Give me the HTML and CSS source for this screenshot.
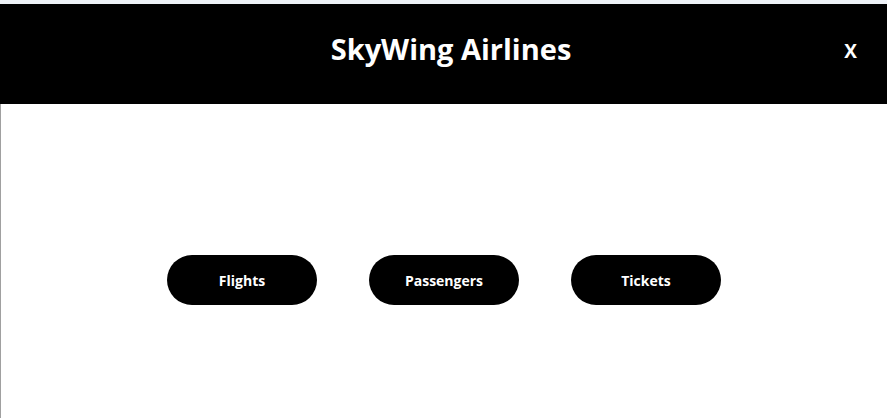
FILE: index.html
```html
<!DOCTYPE html>
<html lang="en">
  <head>
    <meta charset="UTF-8" />
    <meta name="viewport" content="width=device-width, initial-scale=1.0" />
    <title>SkyWing Airlines</title>
    <link rel="stylesheet" href="styles.css">
  </head>
  <body>
    <div id="topbar"></div>
    <div id="app">
      <header id="header">
        <h1>SkyWing Airlines</h1>
        <button id="close">X</button>
      </header>
      <main id="menu">
        <button class="menu-btn">Flights</button>
        <button class="menu-btn">Passengers</button>
        <button class="menu-btn">Tickets</button>
      </main>
    </div>
  </body>
</html>
```

FILE: styles.css
```css
html {
  box-sizing: border-box;
}
body {
  font-family: "Open Sans", Arial, sans-serif;
  margin: 0;
  padding: 0;
  background-color: white;
  height: 418px;
  overflow: hidden;
}
#topbar {
  height: 4px;
  background-color: #eef2f8;
}
#app {
  border-left: 1px solid #a0a0a0;
  height: 414px;
  display: flex;
  flex-direction: column;
}
#header {
  height: 100px;
  margin-left: -1px;
  background-color: black;
  color: white;
  display: flex;
  justify-content: center;
  align-items: center;
  position: relative;
}
#header h1 {
  margin: 0 0 12px 15px;
  font-size: 29px;
  font-weight: 700;
}
#close {
  position: absolute;
  right: 30px;
  top: 34px;
  background: none;
  border: none;
  color: white;
  font-family: "Open Sans", Arial, sans-serif;
  font-weight: 700;
  font-size: 19px;
  cursor: pointer;
  padding: 0;
}
#menu {
  flex: 1;
  display: flex;
  justify-content: center;
  align-items: center;
  gap: 52px;
  padding-top: 38px;
}
.menu-btn {
  width: 150px;
  height: 50px;
  border: none;
  border-radius: 25px;
  background-color: black;
  color: white;
  font-family: "Open Sans", Arial, sans-serif;
  font-weight: 700;
  font-size: 14px;
  cursor: pointer;
}
```
